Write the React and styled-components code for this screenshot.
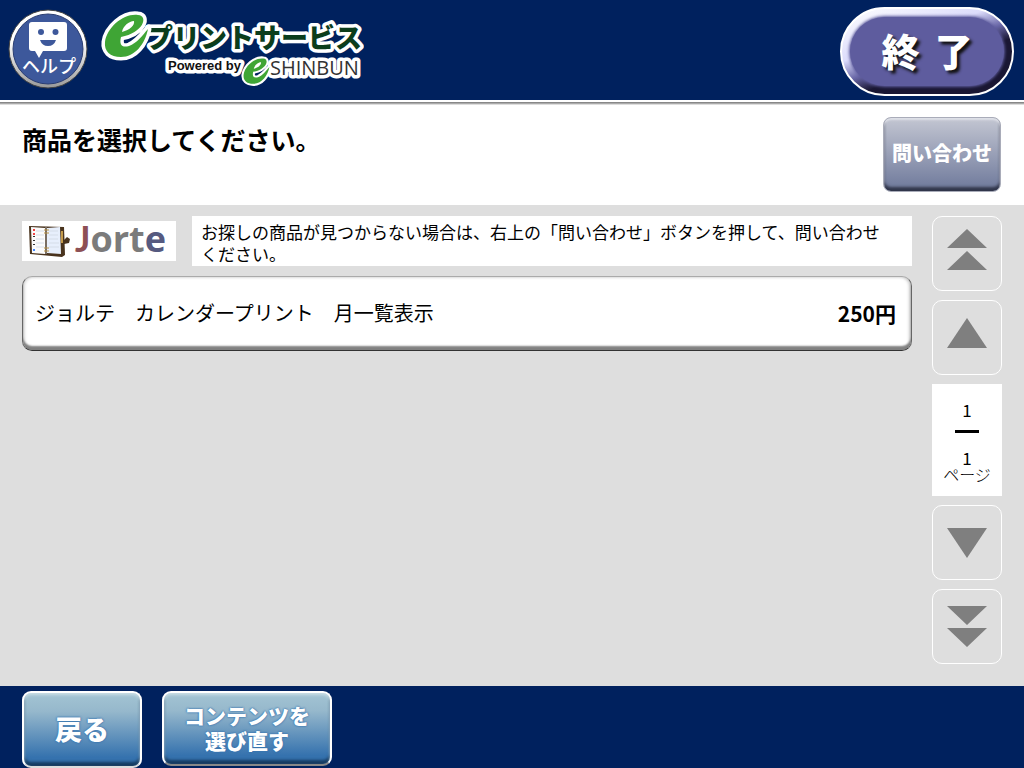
import React from 'react';
import styled, { createGlobalStyle } from 'styled-components';

const GlobalStyle = createGlobalStyle`
  * {
    box-sizing: border-box;
  }
  body {
    margin: 0;
    font-family: "Noto Sans CJK JP", "Liberation Sans", sans-serif;
    color: #000;
  }
  button {
    font-family: inherit;
    padding: 0;
    cursor: pointer;
  }
`;

const Page = styled.div`
  display: flex;
  flex-direction: column;
  min-height: 100vh;
  background: #dedede;
`;

const Header = styled.header`
  display: flex;
  align-items: center;
  height: 100px;
  padding: 0 10px 2px 8px;
  background: #00215e;
`;

const HelpButton = styled.button`
  width: 80px;
  height: 80px;
  border: none;
  border-radius: 50%;
  background: none;
`;

const LogoLink = styled.a`
  display: block;
  height: 80px;
  margin: 0 auto 0 12px;
`;

const ExitButton = styled.button`
  width: 174px;
  height: 89px;
  margin-top: 5px;
  padding: 8px;
  border: 2px solid #fff;
  border-radius: 45px;
  background: linear-gradient(160deg, #fff, #dcdcfb 36%, #6a68a8 50%, #1a1733 62%);
  color: #fff;
  font-size: 38px;
  font-weight: 900;
  line-height: 66px;
  text-shadow: 3px 3px 3px #111;
`;

const ExitLabel = styled.span`
  display: flex;
  justify-content: center;
  gap: 15px;
  height: 69px;
  border-radius: 35px;
  background: #5e5c9e;
  box-shadow: 0 0 3px 1px #5e5c9e;
`;

const Intro = styled.section`
  display: flex;
  justify-content: space-between;
  align-items: flex-start;
  height: 105px;
  padding: 12px 23px 0 22px;
  border-top: 2px solid #fff;
  background: linear-gradient(#777, #bbb 2px, #fff 3px);
`;

const Title = styled.h1`
  margin: 5px 0 0;
  font-size: 25px;
  font-weight: 700;
  line-height: 40px;
`;

const ContactButton = styled.button`
  width: 118px;
  height: 75px;
  margin-top: 3px;
  padding-bottom: 4px;
  border: 1px solid #a9acb9;
  border-radius: 8px;
  background: linear-gradient(#c3c6d2, #7680a0 90%);
  box-shadow: inset 0 2px 2px #dfe1e8, inset 0 -4px 3px #30354a;
  color: #fff;
  font-size: 20px;
  font-weight: 900;
  white-space: nowrap;
`;

const Main = styled.main`
  flex: 1;
  display: grid;
  grid-template-columns: 1fr 70px;
  gap: 20px;
  padding: 11px 22px 22px;
`;

const Shop = styled.div`
  display: flex;
  align-items: center;
  gap: 16px;
  margin-bottom: 10px;
`;

const ShopLogo = styled.div`
  flex: none;
  width: 154px;
  height: 40px;
  background: #fff;

  svg {
    overflow: visible;
  }
`;

const Notice = styled.p`
  flex: 1;
  margin: 0;
  padding: 5px 9px 1px;
  background: #fff;
  font-size: 17px;
  line-height: 22px;
`;

const ProductButton = styled.button`
  display: flex;
  justify-content: space-between;
  align-items: center;
  width: 100%;
  height: 75px;
  padding: 0 15px 2px 12px;
  border: 1px solid #666;
  border-top-color: #aaa;
  border-bottom-color: #333;
  border-radius: 10px;
  background: #fff;
  box-shadow: inset 0 -4px 2px #808080, inset -2px 0 3px #ccc, inset 2px 0 3px #ddd;
  color: #000;
  font-size: 20px;
`;

const Price = styled.span`
  font-size: 21px;
  font-weight: 700;
`;

const Pager = styled.nav`
  display: flex;
  flex-direction: column;
  gap: 9px;
`;

const PagerButton = styled.button`
  display: flex;
  justify-content: center;
  height: 75px;
  border: 1px solid #fff;
  border-radius: 10px;
  background: none;
`;

const PageCount = styled.div`
  display: flex;
  flex-direction: column;
  align-items: center;
  height: 112px;
  padding-top: 16px;
  background: #fff;
  font-size: 17px;
  line-height: 20px;
`;

const PageLine = styled.span`
  width: 24px;
  height: 3px;
  margin: 10px 0 15px;
  background: #000;
`;

const PageUnit = styled.span`
  font-size: 16px;
  font-weight: 300;
  line-height: 12px;
`;

const Footer = styled.footer`
  display: flex;
  align-items: flex-start;
  gap: 20px;
  height: 82px;
  padding: 5px 22px 0;
  background: #00215e;
`;

const FooterButton = styled.button`
  width: ${props => (props.$wide ? 170 : 120)}px;
  height: ${props => (props.$wide ? 75 : 77)}px;
  padding-bottom: 2px;
  border: 2px solid #fff;
  border-bottom-color: ${props => (props.$wide ? '#888' : '#ddd')};
  border-radius: 9px;
  background: linear-gradient(#a3c4d3, #96b8cc 25%, #3572ae 88%);
  box-shadow: inset 0 2px 3px #c9dde4, inset 0 -4px 3px #153a60;
  color: #fff;
  font-size: ${props => (props.$wide ? 21 : 27)}px;
  font-weight: 900;
  line-height: 25px;
  text-shadow: 0 0 2px #3572ae, 0 0 2px #3572ae;
`;

const HelpIcon = () => (
  <svg width="80" height="80" viewBox="0 0 80 80">
    <defs>
      <linearGradient id="ring" x1="0" y1="0" x2="0" y2="1">
        <stop offset="0.4" stopColor="#fff" />
        <stop offset="1" stopColor="#999" />
      </linearGradient>
    </defs>
    <circle cx="40" cy="40" r="39" fill="url(#ring)" stroke="#444" strokeWidth="1" />
    <circle cx="40" cy="40" r="35" fill="#3d589b" stroke="#2a3d72" strokeWidth="1" />
    <path d="M24 13h32q3 0 3 3v23q0 3-3 3H35l-4 7-4-7h-3q-3 0-3-3V16q0-3 3-3z" fill="#fff" />
    <circle cx="33" cy="23" r="3" fill="#3d589b" />
    <circle cx="47.5" cy="23" r="3" fill="#3d589b" />
    <path d="M32 31h16q-2 6-8 6t-8-6z" fill="#3d589b" />
    <text x="41" y="64" textAnchor="middle" fontSize="18" fontWeight="500" fill="#fff">ヘルプ</text>
  </svg>
);

const LeafE = ({ transform }) => (
  <path
    transform={transform}
    fillRule="evenodd"
    d="M34 1C45 2 39 19 17 23C15 31 18 34 25 32C33 29 38 22 44 15C41 30 31 43 17 43C6 43 0 37 1 28C3 13 20-1 34 1zM30 7C25 7 19 12 18 18C26 16 31 11 30 7z"
  />
);

const ServiceLogo = () => (
  <svg width="264" height="80" viewBox="0 0 264 80" role="img" aria-label="eプリントサービス Powered by eSHINBUN">
    <g stroke="#fff" strokeWidth="7" strokeLinejoin="round" paintOrder="stroke">
      <text x="46" y="39" fontSize="27" fontWeight="900" fill="#0b3d1c">プリントサービス</text>
      <g fontFamily="Liberation Sans, sans-serif">
        <text x="68" y="61" fontSize="13" fontWeight="700" fill="#111">Powered by</text>
      </g>
      <text x="170" y="66" fontSize="20" fontFamily="Open Sans, sans-serif" fontWeight="500" fill="#333">SHINBUN</text>
      <g fill="#3fa535">
        <LeafE transform="translate(4 5)" />
        <LeafE transform="translate(143 49) scale(.6)" />
      </g>
    </g>
  </svg>
);

const JorteLogo = () => (
  <svg width="154" height="40" viewBox="0 0 154 40" role="img" aria-label="Jorte">
    <path d="M7 5l35 1 1 28-3 2-32-3z" fill="#49331d" />
    <path d="M9 6l14 1v26l-13-1z" fill="#fbfbfb" />
    <path d="M25 7l13-1 1 27-14-1z" fill="#e7effc" />
    <path d="M39 10h2v12h-2z" fill="#c49a4a" />
    <path d="M42 19l3-3 3 2-1 4-5 1z" fill="#49331d" />
    <path d="M14 10h8M14 14h8M14 18h8M14 22h8M14 26h8M27 10h9M27 14h9M27 18h9M27 22h10M27 26h10" stroke="#d5dde8" />
    <path d="M12 8v6" stroke="#e44" strokeWidth="2" strokeDasharray="2 2" />
    <path d="M12 15v10" stroke="#333" strokeWidth="2" strokeDasharray="1 3" />
    <path d="M12 28v2" stroke="#48f" strokeWidth="2" />
    <path d="M24 6v27" stroke="#aaa" strokeWidth="1" />
    <path d="M22 9h5M22 12h5M22 27h5M22 30h5" stroke="#b99145" />
    <text x="53" y="31" fontFamily="Open Sans, sans-serif" fontSize="36" fontWeight="700" fill="#7b7b7b">
      <tspan fontFamily="Lato, sans-serif" fill="#8d5055">J</tspan>ort<tspan fill="#565a80">e</tspan>
    </text>
  </svg>
);

const Arrow = ({ d }) => (
  <svg width="68" height="73" viewBox="0 0 68 73" aria-hidden="true">
    <path d={d} fill="#7f7f7f" />
  </svg>
);

const App = () => (
  <Page>
    <GlobalStyle />
    <Header>
      <HelpButton aria-label="ヘルプ"><HelpIcon /></HelpButton>
      <LogoLink href="#"><ServiceLogo /></LogoLink>
      <ExitButton><ExitLabel><span>終</span><span>了</span></ExitLabel></ExitButton>
    </Header>
    <Intro>
      <Title>商品を選択してください。</Title>
      <ContactButton>問い合わせ</ContactButton>
    </Intro>
    <Main>
      <div>
        <Shop>
          <ShopLogo><JorteLogo /></ShopLogo>
          <Notice>
            お探しの商品が見つからない場合は、右上の「問い合わせ」ボタンを押して、問い合わせ
            <br />
            ください。
          </Notice>
        </Shop>
        <ProductButton>
          <span>ジョルテ　カレンダープリント　月一覧表示</span>
          <Price>250円</Price>
        </ProductButton>
      </div>
      <Pager aria-label="ページ">
        <PagerButton aria-label="最初のページ"><Arrow d="M34 12l20 19H14zM34 34l20 19H14z" /></PagerButton>
        <PagerButton aria-label="前のページ"><Arrow d="M34 17l20 30H14z" /></PagerButton>
        <PageCount>
          <span>1</span>
          <PageLine />
          <span>1</span>
          <PageUnit>ページ</PageUnit>
        </PageCount>
        <PagerButton aria-label="次のページ"><Arrow d="M14 22h40L34 52z" /></PagerButton>
        <PagerButton aria-label="最後のページ"><Arrow d="M14 16h40L34 35zM14 38h40L34 57z" /></PagerButton>
      </Pager>
    </Main>
    <Footer>
      <FooterButton>戻る</FooterButton>
      <FooterButton $wide>コンテンツを<br />選び直す</FooterButton>
    </Footer>
  </Page>
);

export default App;
